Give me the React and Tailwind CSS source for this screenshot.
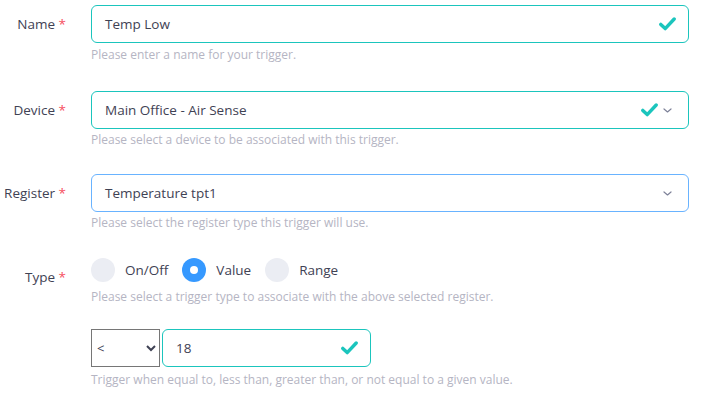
import React from "react";

const Check = ({ className = "" }) => (
  <svg className={className} width="17" height="14" viewBox="0 0 17 14" fill="none">
    <path d="M1.8 7.4 L6.2 11.6 L15.2 2" stroke="#1bc5bd" strokeWidth="3.4" strokeLinecap="round" strokeLinejoin="round" />
  </svg>
);

const Chevron = ({ className = "" }) => (
  <svg className={className} width="9" height="5" viewBox="0 0 9 5" fill="none">
    <path d="M1 1 L4.5 4 L8 1" stroke="#7e8299" strokeWidth="1.2" strokeLinecap="round" strokeLinejoin="round" />
  </svg>
);

function Label({ children }) {
  return (
    <label className="pt-[9px] text-right text-[13.5px] leading-5 text-[#3f4254]">
      {children} <span className="text-[#f64e60]">*</span>
    </label>
  );
}

function Help({ children, className = "" }) {
  return <p className={"text-[12px] leading-4 text-[#b5b5c3] " + className}>{children}</p>;
}

function Field({ value, border, check, chevron }) {
  return (
    <div className={"flex h-[38px] items-center rounded-[6px] border bg-white pl-[13px] pr-[14px] " + border}>
      <span className="flex-1 text-[13.5px] text-[#3f4254]">{value}</span>
      {check && <Check className={chevron ? "mr-[5px]" : "mr-[-2px]"} />}
      {chevron && <Chevron className="mr-[2px]" />}
    </div>
  );
}

function Radio({ label, checked }) {
  return (
    <span className="flex items-center gap-[10px]">
      {checked ? (
        <span className="flex h-6 w-6 items-center justify-center rounded-full bg-[#3699ff]">
          <span className="h-2 w-2 rounded-full bg-white" />
        </span>
      ) : (
        <span className="h-6 w-6 rounded-full bg-[#ebedf3]" />
      )}
      <span className="text-[13.5px] text-[#3f4254]">{label}</span>
    </span>
  );
}

export default function App() {
  return (
    <div className="min-h-[397px] bg-white pr-[15px] pt-[5px]" style={{ fontFamily: "'Open Sans', 'Noto Sans', sans-serif" }}>
      <div className="grid grid-cols-[66px_1fr] gap-x-[25px]">
        <Label>Name</Label>
        <div className="mb-[28px]">
          <Field value="Temp Low" border="border-[#1bc5bd]" check />
          <Help className="mt-[4px]">Please enter a name for your trigger.</Help>
        </div>

        <Label>Device</Label>
        <div className="mb-[26px]">
          <Field value="Main Office - Air Sense" border="border-[#1bc5bd]" check chevron />
          <Help className="mt-[3px]">Please select a device to be associated with this trigger.</Help>
        </div>

        <Label>Register</Label>
        <div className="mb-[27px]">
          <Field value="Temperature tpt1" border="border-[#69b3ff]" chevron />
          <Help className="mt-[3px]">Please select the register type this trigger will use.</Help>
        </div>

        <Label>Type</Label>
        <div>
          <div className="flex h-6 items-center gap-[14px]">
            <Radio label="On/Off" />
            <Radio label="Value" checked />
            <Radio label="Range" />
          </div>
          <Help className="mt-[7px]">Please select a trigger type to associate with the above selected register.</Help>
          <div className="mt-[24px] flex w-[280px] gap-[2px]">
            <select className="h-[38px] w-[69px] border border-[#767676] bg-white pl-[1px] text-[13px] text-[#3f4254]" defaultValue="<">
              <option value="<">&lt;</option>
              <option value="=">=</option>
              <option value=">">&gt;</option>
            </select>
            <div className="flex-1">
              <Field value="18" border="border-[#1bc5bd]" check />
            </div>
          </div>
          <Help className="mt-[5px]">Trigger when equal to, less than, greater than, or not equal to a given value.</Help>
        </div>
      </div>
    </div>
  );
}
